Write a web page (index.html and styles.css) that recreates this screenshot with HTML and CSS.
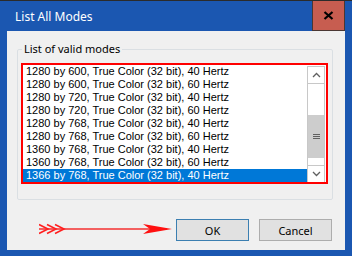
FILE: index.html
```html
<!doctype html>
<html lang="en">
<head>
	<meta charset="UTF-8">
	<title>List All Modes</title>
<link rel="stylesheet" href="styles.css">
</head>
<body>

<div class="titlebar">
	<span class="title">List All Modes</span>
	<span class="close"><svg width="11" height="9" viewBox="0 0 11 9"><path d="M1.5 1 L9.5 8 M9.5 1 L1.5 8" stroke="#000" stroke-width="2.2"/></svg></span>
</div>

<div class="client">
	<fieldset class="group">
		<legend>List of valid modes</legend>
		<div class="listbox">
			<ul class="items">
				<li>1280 by 600, True Color (32 bit), 40 Hertz</li>
				<li>1280 by 600, True Color (32 bit), 60 Hertz</li>
				<li>1280 by 720, True Color (32 bit), 40 Hertz</li>
				<li>1280 by 720, True Color (32 bit), 60 Hertz</li>
				<li>1280 by 768, True Color (32 bit), 40 Hertz</li>
				<li>1280 by 768, True Color (32 bit), 60 Hertz</li>
				<li>1360 by 768, True Color (32 bit), 40 Hertz</li>
				<li>1360 by 768, True Color (32 bit), 60 Hertz</li>
				<li class="selected">1366 by 768, True Color (32 bit), 40 Hertz</li>
			</ul>
			<div class="scrollbar">
				<div class="arrow"><svg width="9" height="6" viewBox="0 0 9 6"><path d="M1 5 L4.5 1.5 L8 5" fill="none" stroke="#606060" stroke-width="1.3"/></svg></div>
				<div class="track"></div>
				<div class="thumb"><span></span><span></span><span></span></div>
				<div class="track small"></div>
				<div class="arrow"><svg width="9" height="6" viewBox="0 0 9 6"><path d="M1 1 L4.5 4.5 L8 1" fill="none" stroke="#606060" stroke-width="1.3"/></svg></div>
			</div>
		</div>
	</fieldset>

	<div class="buttons">
		<svg class="pointer" width="133" height="12" viewBox="0 0 133 12">
			<path d="M0 6 H128" stroke="#f36060" stroke-width="2"/>
			<path d="M0 1.5 L9 6 L0 10.5 M8 1.5 L17 6 L8 10.5 M16 1.5 L25 6 L16 10.5" fill="none" stroke="#ff2020" stroke-width="1.6"/>
			<path d="M104 1 L133 6 L104 11 L111 6 Z" fill="#ff1010"/>
		</svg>
		<button class="ok">OK</button>
		<button>Cancel</button>
	</div>
</div>

</body>
</html>
```

FILE: styles.css
```css
html, body {
	margin: 0;
	width: 352px;
	height: 256px;
	overflow: hidden;
}
body {
	background: #1b57b1;
	border-top: 1px solid #2b2b2b;
	font-family: "Noto Sans", sans-serif;
	font-size: 11px;
	box-sizing: border-box;
}
.titlebar {
	height: 30px;
	display: flex;
	align-items: center;
	padding-right: 7px;
}
.title {
	color: #fff;
	font-size: 12px;
	padding-left: 15px;
}
.close {
	margin-left: auto;
	width: 31px;
	height: 29px;
	background: #c75d50;
	border: 1px solid #4a3733;
	border-top: 0;
	display: flex;
	align-items: center;
	justify-content: center;
}
.client {
	margin: 0 7px;
	height: 219px;
	background: #f0f0f0;
	padding-top: 10px;
	box-sizing: border-box;
}
.group {
	margin: 0 12px 0 10px;
	padding: 0 4px 15px 3px;
	border: 1px solid #dadfe3;
	border-radius: 2px;
}
.group legend {
	padding: 0 2px;
	margin-left: 1px;
	line-height: 16px;
	color: #000;
}
.listbox {
	margin-top: 6px;
	border: 2px solid #f00;
	background: #fff;
	display: flex;
	height: 117px;
}
.items {
	list-style: none;
	margin: 0;
	padding: 0;
	flex: 1;
	font-family: "Liberation Sans", sans-serif;
	font-size: 11px;
}
.items li {
	height: 13px;
	line-height: 13px;
	padding-left: 3px;
	white-space: nowrap;
	color: #000;
}
.items li.selected {
	background: #0078d7;
	color: #fff;
}
.scrollbar {
	width: 16px;
	margin: 1px 1px 0 0;
	border: 1px solid #c8c8c8;
	border-bottom: 0;
	display: flex;
	flex-direction: column;
	background: #fff;
}
.arrow {
	height: 16px;
	display: flex;
	align-items: center;
	justify-content: center;
}
.arrow:first-child {
	border-bottom: 1px solid #c8c8c8;
}
.arrow:last-child {
	border-top: 1px solid #c8c8c8;
}
.track {
	height: 31px;
}
.track.small {
	height: 7px;
}
.thumb {
	height: 44px;
	background: #cdcdcd;
	display: flex;
	flex-direction: column;
	align-items: center;
	justify-content: center;
	gap: 1px;
}
.thumb span {
	width: 7px;
	height: 1px;
	background: #606060;
}
.buttons {
	margin-top: 19px;
	display: flex;
	align-items: center;
	padding-left: 32px;
}
.pointer {
	margin-right: 4px;
	margin-top: -3px;
}
button {
	width: 73px;
	height: 22px;
	margin-right: 10px;
	background: #e1e1e1;
	border: 1px solid #adadad;
	font-family: "Noto Sans", sans-serif;
	font-size: 11px;
	color: #000;
	padding: 0;
}
button.ok {
	border-color: #3c7fb1;
}
```
